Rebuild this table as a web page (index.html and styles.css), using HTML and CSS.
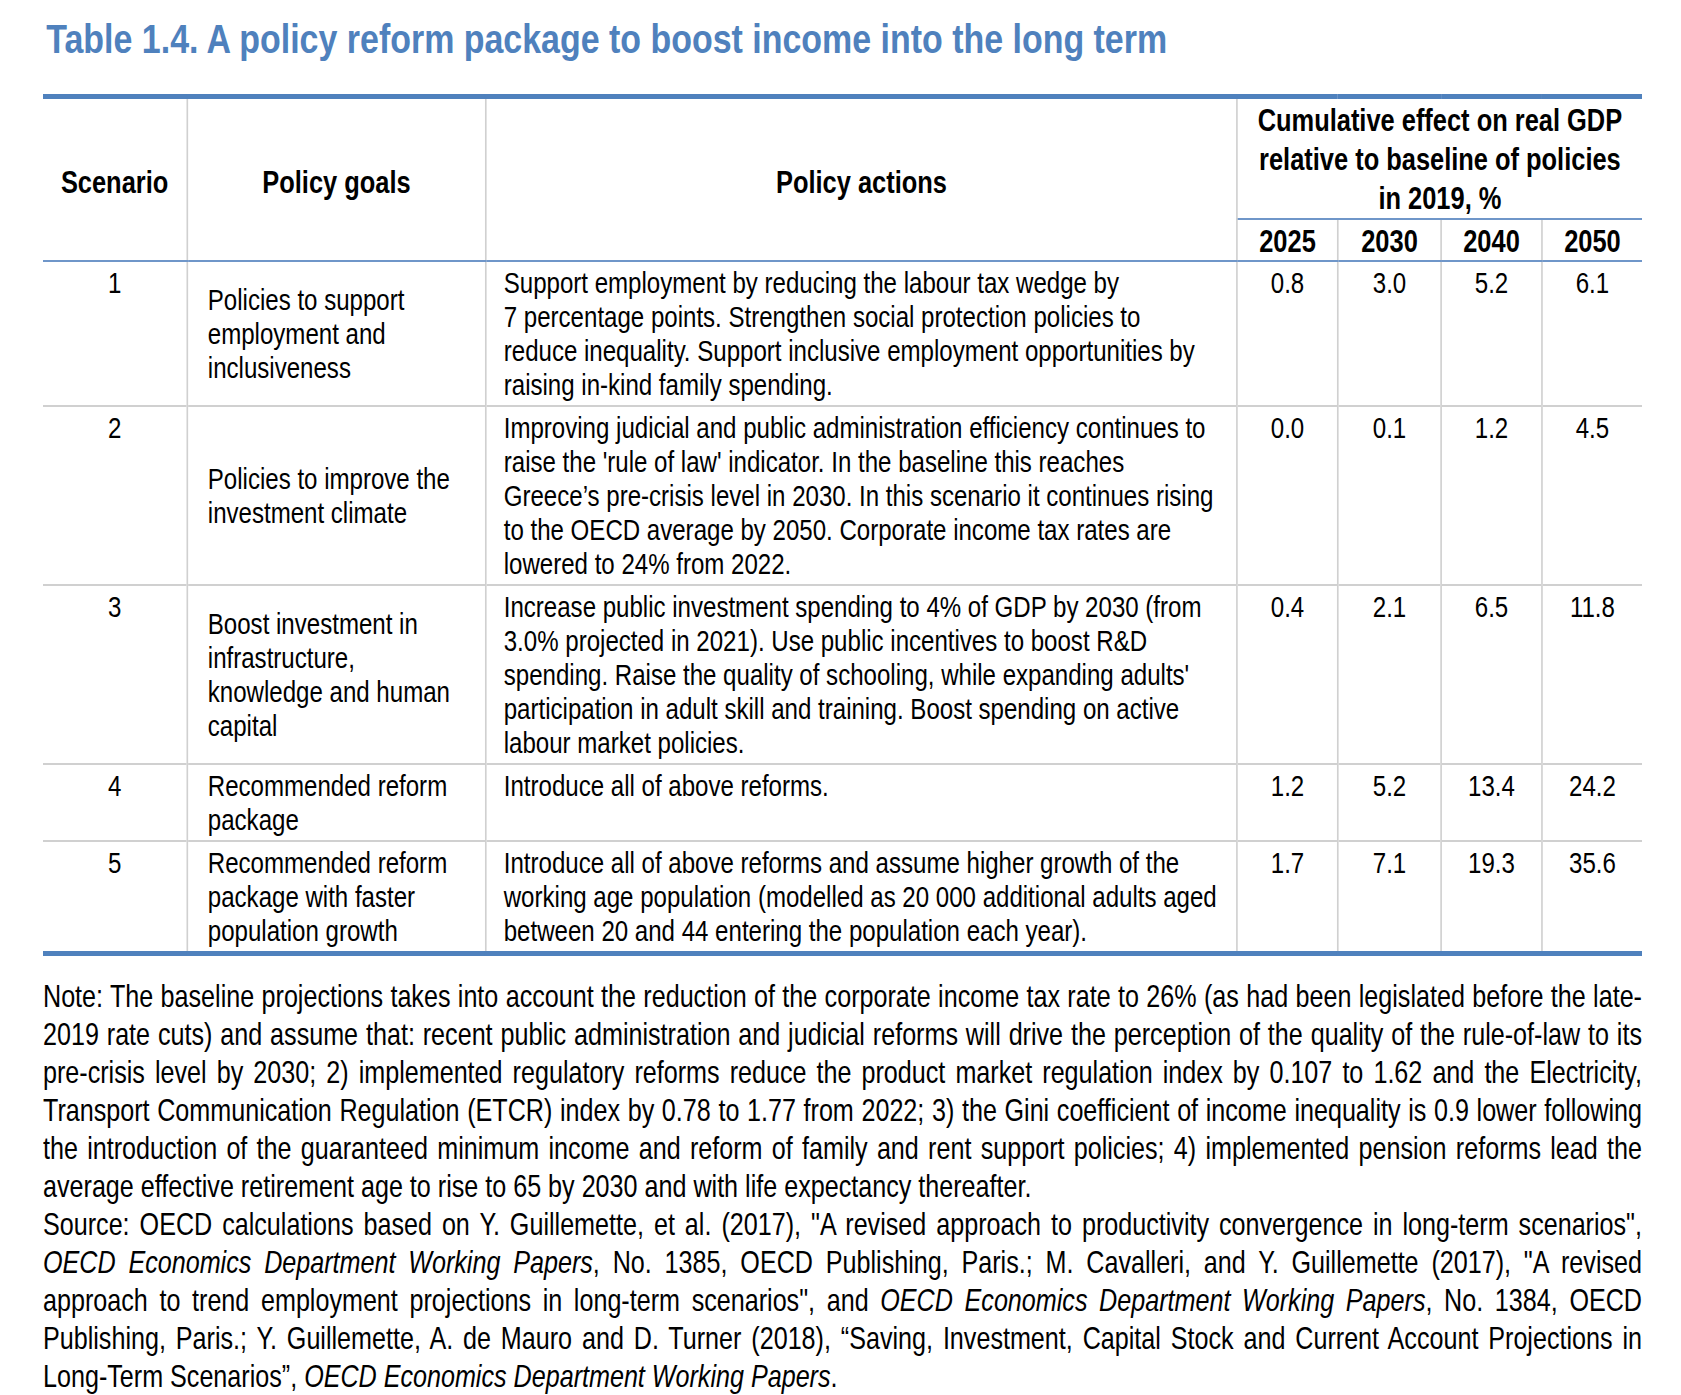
FILE: index.html
```html
<!DOCTYPE html>
<html lang="en">
<head>
<meta charset="utf-8">
<title>Table 1.4</title>
<link rel="stylesheet" href="styles.css">
</head>
<body>
<div class="sheet">
<div class="page">
  <h1 class="title">Table 1.4. A policy reform package to boost income into the long term</h1>
  <table class="tbl">
    <colgroup>
      <col class="c-scen">
      <col class="c-goal">
      <col class="c-act">
      <col class="c-y1">
      <col class="c-y2">
      <col class="c-y3">
      <col class="c-y4">
    </colgroup>
    <thead>
      <tr class="hrow1">
        <th rowspan="2" class="h-main">Scenario</th>
        <th rowspan="2" class="h-main">Policy goals</th>
        <th rowspan="2" class="h-main">Policy actions</th>
        <th colspan="4" class="h-cum">Cumulative effect on real GDP relative to baseline of policies in 2019, %</th>
      </tr>
      <tr class="hrow2">
        <th class="h-yr">2025</th>
        <th class="h-yr">2030</th>
        <th class="h-yr">2040</th>
        <th class="h-yr">2050</th>
      </tr>
    </thead>
    <tbody>
      <tr>
        <td class="num">1</td>
        <td class="goal">Policies to support employment and inclusiveness</td>
        <td class="act">Support employment by reducing the labour tax wedge by 7&nbsp;percentage points. Strengthen social protection policies to reduce inequality. Support inclusive employment opportunities by raising in-kind family spending.</td>
        <td class="num">0.8</td>
        <td class="num">3.0</td>
        <td class="num">5.2</td>
        <td class="num">6.1</td>
      </tr>
      <tr>
        <td class="num">2</td>
        <td class="goal">Policies to improve the investment climate</td>
        <td class="act">Improving judicial and public administration efficiency continues to raise the 'rule of law' indicator. In the baseline this reaches Greece’s pre-crisis level in 2030. In this scenario it continues rising to the OECD average by 2050. Corporate income tax rates are lowered to 24% from 2022.</td>
        <td class="num">0.0</td>
        <td class="num">0.1</td>
        <td class="num">1.2</td>
        <td class="num">4.5</td>
      </tr>
      <tr>
        <td class="num">3</td>
        <td class="goal">Boost investment in infrastructure, knowledge and human capital</td>
        <td class="act">Increase public investment spending to 4% of GDP by 2030 (from 3.0% projected in 2021). Use public incentives to boost R&amp;D spending. Raise the quality of schooling, while expanding adults' participation in adult skill and training. Boost spending on active labour market policies.</td>
        <td class="num">0.4</td>
        <td class="num">2.1</td>
        <td class="num">6.5</td>
        <td class="num">11.8</td>
      </tr>
      <tr>
        <td class="num">4</td>
        <td class="goal">Recommended reform package</td>
        <td class="act">Introduce all of above reforms.</td>
        <td class="num">1.2</td>
        <td class="num">5.2</td>
        <td class="num">13.4</td>
        <td class="num">24.2</td>
      </tr>
      <tr>
        <td class="num">5</td>
        <td class="goal">Recommended reform package with faster population growth</td>
        <td class="act">Introduce all of above reforms and assume higher growth of the working age population (modelled as 20&nbsp;000 additional adults aged between 20 and 44 entering the population each year).</td>
        <td class="num">1.7</td>
        <td class="num">7.1</td>
        <td class="num">19.3</td>
        <td class="num">35.6</td>
      </tr>
    </tbody>
  </table>
  <p class="note">Note: The baseline projections takes into account the reduction of the corporate income tax rate to 26% (as had been legislated before the late-2019 rate cuts) and assume that: recent public administration and judicial reforms will drive the perception of the quality of the rule-of-law to its pre-crisis level by 2030; 2) implemented regulatory reforms reduce the product market regulation index by 0.107 to 1.62 and the Electricity, Transport Communication Regulation (ETCR) index by 0.78 to 1.77 from 2022; 3) the Gini coefficient of income inequality is 0.9 lower following the introduction of the guaranteed minimum income and reform of family and rent support policies; 4) implemented pension reforms lead the average effective retirement age to rise to 65 by 2030 and with life expectancy thereafter.</p>
  <p class="note">Source: OECD calculations based on Y. Guillemette, et al. (2017), "A revised approach to productivity convergence in long-term scenarios", <i>OECD Economics Department Working Papers</i>, No. 1385, OECD Publishing, Paris.; M. Cavalleri, and Y. Guillemette (2017), "A revised approach to trend employment projections in long-term scenarios", and <i>OECD Economics Department Working Papers</i>, No. 1384, OECD Publishing, Paris.; Y. Guillemette, A. de Mauro and D. Turner (2018), “Saving, Investment, Capital Stock and Current Account Projections in Long-Term Scenarios”, <i>OECD Economics Department Working Papers</i>.</p>
</div>
</div>
</body>
</html>
```

FILE: styles.css
```css
/* The reference uses Arial Narrow, which is not installed.
   Arial Narrow is Arial compressed to 82% width, so the page is laid out
   with Liberation Sans (Arial metrics) at 1/0.82 of the target width and
   compressed horizontally as a whole. */

html, body {
  margin: 0;
  padding: 0;
  background: #ffffff;
}

body {
  font-family: "Liberation Sans", Arial, sans-serif;
  color: #000000;
}

.sheet {
  width: 1599px;
  margin-left: 43px;
  overflow: hidden;
}

.page {
  width: 1950px;
  transform: scaleX(0.82);
  transform-origin: 0 0;
}

.title {
  margin: 16px 0 32px 4px;
  font-size: 41.4px;
  line-height: 46px;
  font-weight: bold;
  color: #4f81bd;
}

.tbl {
  width: 1950px;
  table-layout: fixed;
  border-collapse: collapse;
  border-top: 5px solid #4f81bd;
  border-bottom: 5px solid #4f81bd;
  font-size: 29.35px;
  line-height: 34px;
}

.c-scen { width: 175.6px; }
.c-goal { width: 364.6px; }
.c-act { width: 915.9px; }
.c-y1 { width: 123.2px; }
.c-y2 { width: 125.6px; }
.c-y3 { width: 123.2px; }
.c-y4 { width: 121.9px; }

.tbl th,
.tbl td {
  border-left: 2.5px solid #d0d0d0;
  border-right: 2.5px solid #d0d0d0;
}

.tbl th:first-child,
.tbl td:first-child {
  border-left: none;
}

.tbl tr > :last-child {
  border-right: none;
}

.tbl th {
  font-size: 31px;
  font-weight: bold;
  text-align: center;
  vertical-align: middle;
}

.h-main {
  padding: 6px 5px 0;
  line-height: 38px;
  border-bottom: 2px solid #6f96c9;
}

.h-cum {
  padding: 2px 10px 0;
  line-height: 39px;
  border-bottom: 2px solid #6f96c9;
}

.h-yr {
  padding: 4px 5px 0;
  line-height: 36px;
  border-bottom: 2px solid #6f96c9;
}

.tbl td {
  padding: 4px 20.7px 3px;
  border-top: 2px solid #d0d0d0;
  vertical-align: top;
}

.tbl tbody tr:first-child td {
  border-top: 2px solid #6f96c9;
}

.tbl td.num {
  text-align: center;
  padding-left: 5px;
  padding-right: 5px;
}

.tbl td.goal {
  vertical-align: middle;
  padding-left: 24.4px;
  padding-right: 22px;
}

.tbl td.act {
  text-align: left;
}

.note {
  margin: 0;
  font-size: 30.65px;
  line-height: 38px;
  text-align: justify;
}

.tbl + .note {
  margin-top: 21px;
}
```
